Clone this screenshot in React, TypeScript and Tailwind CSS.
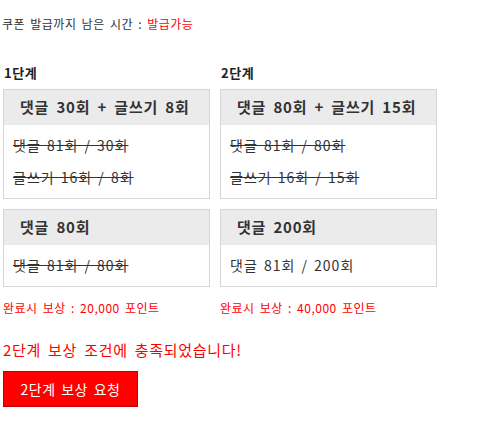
const FONT = "font-['Noto_Sans_CJK_KR','Noto_Sans',sans-serif]"

interface Row {
  text: string
  done: boolean
}

interface Mission {
  title: string
  rows: Row[]
}

function MissionBox({ mission }: { mission: Mission }) {
  return (
    <div className="border border-[#d6d6d6] bg-white">
      <div className="h-[35px] bg-[#ebebeb] pl-[16px] flex items-center text-[15px] font-bold text-[#333] tracking-[0.8px] [word-spacing:3px]">
        {mission.title}
      </div>
      <div className="pl-[9px] pt-[4px] pb-[5px]">
        {mission.rows.map((row, i) => (
          <p
            key={i}
            className={`text-[14px] leading-[32px] text-[#333] tracking-[1px] [word-spacing:2px] ${row.done ? 'line-through decoration-[#333]' : ''}`}
          >
            {row.text}
          </p>
        ))}
      </div>
    </div>
  )
}

function Stage({
  label,
  width,
  missions,
  reward,
}: {
  label: string
  width: string
  missions: Mission[]
  reward: string
}) {
  return (
    <div className={`flex flex-col ${width}`}>
      <h3 className="text-[13px] leading-[16px] font-bold text-[#222] pl-[1px] tracking-[0.5px]">{label}</h3>
      <div className="mt-[8px] flex flex-col gap-[10px]">
        {missions.map((m, i) => (
          <MissionBox key={i} mission={m} />
        ))}
      </div>
      <p className="mt-[13px] text-[12px] leading-[16px] text-[#ff0000] tracking-[0.5px] [word-spacing:2px]">{reward}</p>
    </div>
  )
}

const STAGE1: Mission[] = [
  {
    title: '댓글 30회 + 글쓰기 8회',
    rows: [
      { text: '댓글 81회 / 30회', done: true },
      { text: '글쓰기 16회 / 8회', done: true },
    ],
  },
  {
    title: '댓글 80회',
    rows: [{ text: '댓글 81회 / 80회', done: true }],
  },
]

const STAGE2: Mission[] = [
  {
    title: '댓글 80회 + 글쓰기 15회',
    rows: [
      { text: '댓글 81회 / 80회', done: true },
      { text: '글쓰기 16회 / 15회', done: true },
    ],
  },
  {
    title: '댓글 200회',
    rows: [{ text: '댓글 81회 / 200회', done: false }],
  },
]

export default function App() {
  return (
    <div className={`${FONT} bg-white min-h-screen pl-[3px] pt-[16px] text-[#333]`}>
      <p className="text-[12px] leading-[16px] -ml-[1px] tracking-[0.5px] [word-spacing:2px]">
        쿠폰 발급까지 남은 시간 : <span className="text-[#ff0000]">발급가능</span>
      </p>

      <div className="mt-[33px] flex gap-[10px]">
        <Stage label="1단계" width="w-[207px]" missions={STAGE1} reward="완료시 보상 : 20,000 포인트" />
        <Stage label="2단계" width="w-[217px]" missions={STAGE2} reward="완료시 보상 : 40,000 포인트" />
      </div>

      <p className="mt-[24px] text-[15px] leading-[20px] text-[#ff0000] tracking-[0.7px] [word-spacing:3px]">
        2단계 보상 조건에 충족되었습니다!
      </p>

      <button className="mt-[11px] w-[135px] h-[36px] bg-[#ff0000] border border-[#c00000] text-white text-[14px] tracking-[0.5px] [word-spacing:2px] flex items-center justify-center">
        2단계 보상 요청
      </button>
    </div>
  )
}
